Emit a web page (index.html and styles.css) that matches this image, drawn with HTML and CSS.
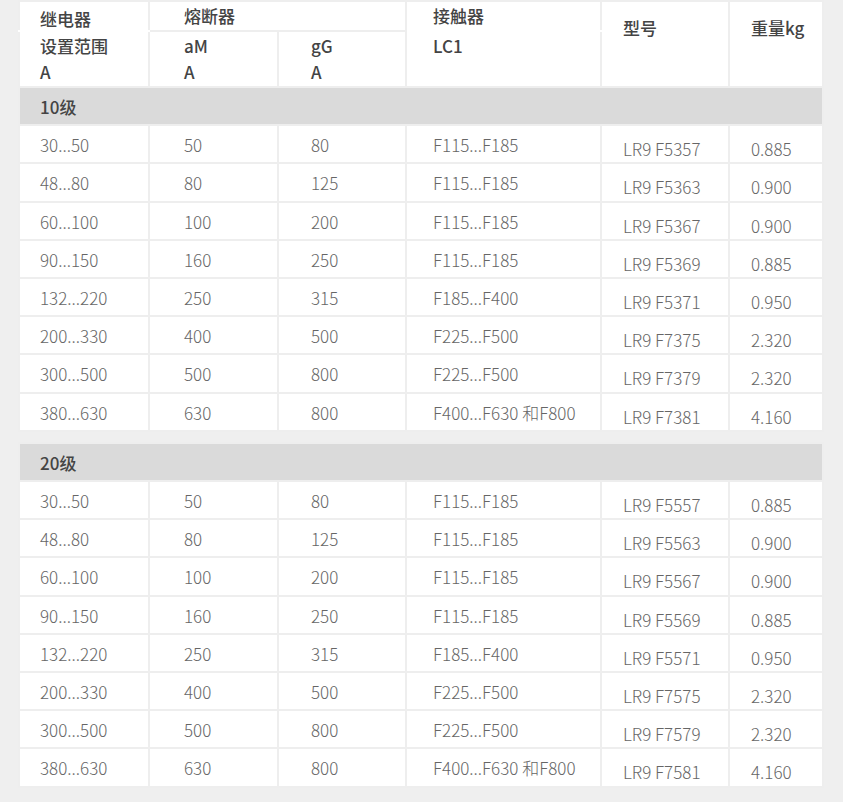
FILE: index.html
```html
<!DOCTYPE html>
<html lang="zh">
<head>
<meta charset="utf-8">
<title>LR9 F 继电器选型表</title>
<link rel="stylesheet" href="styles.css">
</head>
<body>
<div class="page">
  <table class="spec">
    <colgroup>
      <col class="c1"><col class="c2"><col class="c3"><col class="c4"><col class="c5"><col class="c6">
    </colgroup>
    <thead>
      <tr class="h1">
        <th class="p1 nb relay">继电器</th>
        <th class="p2" colspan="2">熔断器</th>
        <th class="p4 nb">接触器</th>
        <th class="p5 tall" rowspan="2">型号</th>
        <th class="p6 tall" rowspan="2">重量kg</th>
      </tr>
      <tr class="h2">
        <th class="p1 nt">设置范围<br>A</th>
        <th class="p2">aM<br>A</th>
        <th class="p3">gG<br>A</th>
        <th class="p4 nt">LC1</th>
      </tr>
    </thead>
    <tbody>
      <tr class="group"><td colspan="6" class="p1">10级</td></tr>
      <tr><td class="p1">30...50</td><td class="p2">50</td><td class="p3">80</td><td class="p4">F115...F185</td><td class="p5 low">LR9 F5357</td><td class="p6 low">0.885</td></tr>
      <tr><td class="p1">48...80</td><td class="p2">80</td><td class="p3">125</td><td class="p4">F115...F185</td><td class="p5 low">LR9 F5363</td><td class="p6 low">0.900</td></tr>
      <tr><td class="p1">60...100</td><td class="p2">100</td><td class="p3">200</td><td class="p4">F115...F185</td><td class="p5 low">LR9 F5367</td><td class="p6 low">0.900</td></tr>
      <tr><td class="p1">90...150</td><td class="p2">160</td><td class="p3">250</td><td class="p4">F115...F185</td><td class="p5 low">LR9 F5369</td><td class="p6 low">0.885</td></tr>
      <tr><td class="p1">132...220</td><td class="p2">250</td><td class="p3">315</td><td class="p4">F185...F400</td><td class="p5 low">LR9 F5371</td><td class="p6 low">0.950</td></tr>
      <tr><td class="p1">200...330</td><td class="p2">400</td><td class="p3">500</td><td class="p4">F225...F500</td><td class="p5 low">LR9 F7375</td><td class="p6 low">2.320</td></tr>
      <tr><td class="p1">300...500</td><td class="p2">500</td><td class="p3">800</td><td class="p4">F225...F500</td><td class="p5 low">LR9 F7379</td><td class="p6 low">2.320</td></tr>
      <tr><td class="p1">380...630</td><td class="p2">630</td><td class="p3">800</td><td class="p4">F400...F630 和F800</td><td class="p5 low">LR9 F7381</td><td class="p6 low">4.160</td></tr>
    </tbody>
  </table>

  <table class="spec second">
    <colgroup>
      <col class="c1"><col class="c2"><col class="c3"><col class="c4"><col class="c5"><col class="c6">
    </colgroup>
    <tbody>
      <tr class="group"><td colspan="6" class="p1">20级</td></tr>
      <tr><td class="p1">30...50</td><td class="p2">50</td><td class="p3">80</td><td class="p4">F115...F185</td><td class="p5 low">LR9 F5557</td><td class="p6 low">0.885</td></tr>
      <tr><td class="p1">48...80</td><td class="p2">80</td><td class="p3">125</td><td class="p4">F115...F185</td><td class="p5 low">LR9 F5563</td><td class="p6 low">0.900</td></tr>
      <tr><td class="p1">60...100</td><td class="p2">100</td><td class="p3">200</td><td class="p4">F115...F185</td><td class="p5 low">LR9 F5567</td><td class="p6 low">0.900</td></tr>
      <tr><td class="p1">90...150</td><td class="p2">160</td><td class="p3">250</td><td class="p4">F115...F185</td><td class="p5 low">LR9 F5569</td><td class="p6 low">0.885</td></tr>
      <tr><td class="p1">132...220</td><td class="p2">250</td><td class="p3">315</td><td class="p4">F185...F400</td><td class="p5 low">LR9 F5571</td><td class="p6 low">0.950</td></tr>
      <tr><td class="p1">200...330</td><td class="p2">400</td><td class="p3">500</td><td class="p4">F225...F500</td><td class="p5 low">LR9 F7575</td><td class="p6 low">2.320</td></tr>
      <tr><td class="p1">300...500</td><td class="p2">500</td><td class="p3">800</td><td class="p4">F225...F500</td><td class="p5 low">LR9 F7579</td><td class="p6 low">2.320</td></tr>
      <tr><td class="p1">380...630</td><td class="p2">630</td><td class="p3">800</td><td class="p4">F400...F630 和F800</td><td class="p5 low">LR9 F7581</td><td class="p6 low">4.160</td></tr>
    </tbody>
  </table>
</div>
</body>
</html>
```
FILE: styles.css
```css
html, body {
  margin: 0;
  padding: 0;
  background: #efefef;
}
.page {
  padding: 0 0 0 18px;
  font-family: "Noto Sans CJK SC", "Noto Sans", sans-serif;
}
.spec {
  border-collapse: collapse;
  table-layout: fixed;
  width: 804px;
  background: #ffffff;
}
.spec.second {
  margin-top: 10px;
}
.c1 { width: 130px; }
.c2 { width: 129px; }
.c3 { width: 128px; }
.c4 { width: 195px; }
.c5 { width: 128px; }
.c6 { width: 94px; }
.spec th,
.spec td {
  border: 2px solid #eeeeee;
  padding: 0;
  text-align: left;
  vertical-align: middle;
  white-space: nowrap;
}
.spec th {
  font-size: 17px;
  font-weight: 500;
  color: #444444;
}
.spec td {
  font-size: 17px;
  font-weight: 300;
  color: #666666;
  height: 34.2px;
  line-height: 34.2px;
  padding-top: 2px;
}
.h1 th {
  height: 28px;
  line-height: 28px;
}
.spec .h1 th.relay {
  height: 22px;
  line-height: 22px;
  padding-top: 6px;
}
.h2 th {
  height: 53px;
  line-height: 26px;
  vertical-align: top;
  padding-top: 1px;
}
.spec th.tall {
  vertical-align: top;
  line-height: 26px;
  padding-top: 13px;
}
.spec th.nb { border-bottom-color: #ffffff; }
.spec th.nt { border-top-color: #ffffff; }
.p1 { padding-left: 20px !important; }
.p2 { padding-left: 34px !important; }
.p3 { padding-left: 32px !important; }
.p4 { padding-left: 26px !important; }
.p5 { padding-left: 21px !important; }
.p6 { padding-left: 21px !important; }
.spec td.low {
  line-height: 27.2px;
  height: 27.2px;
  padding-top: 9px;
}
.spec tr.group td {
  background: #dadada;
  color: #444444;
  font-weight: 500;
  border-color: #eeeeee;
}
```
